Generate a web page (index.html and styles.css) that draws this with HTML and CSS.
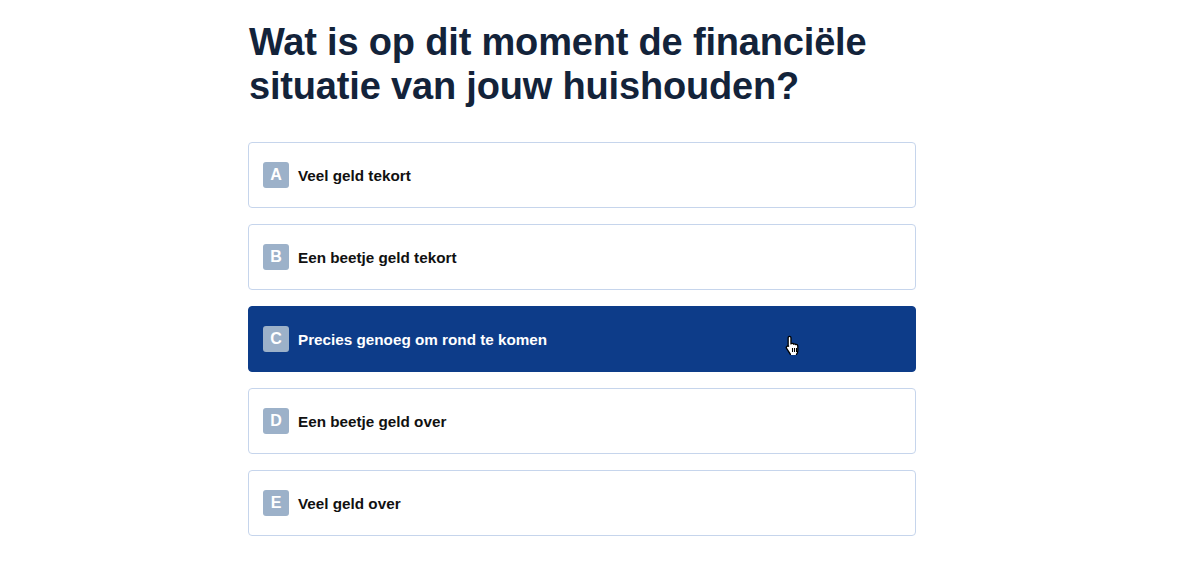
FILE: index.html
```html
<!DOCTYPE html>
<html lang="nl">
<head>
<meta charset="utf-8">
<title>Financiële situatie</title>
<link rel="stylesheet" href="styles.css">
</head>
<body>
<main class="question">
  <h1 class="question-title">Wat is op dit moment de financiële situatie van jouw huishouden?</h1>
  <ul class="options">
    <li class="option"><span class="key">A</span><span class="label">Veel geld tekort</span></li>
    <li class="option"><span class="key">B</span><span class="label">Een beetje geld tekort</span></li>
    <li class="option option-active"><span class="key">C</span><span class="label">Precies genoeg om rond te komen</span>
      <svg class="cursor" width="17" height="20" viewBox="0 0 14 17" aria-hidden="true">
        <path d="M4.5 1.2c.7 0 1.2.5 1.2 1.2v5.1l.5-.1c.6-.4 1.4-.3 1.8.3.6-.3 1.3-.2 1.7.4.6-.2 1.3 0 1.6.6.1.3.2.6.2 1v3.6c0 1.2-.4 2.3-1.1 3.2v1.5H5.2v-1.6L2.1 11.6c-.5-.6-.5-1.4.1-1.9.5-.4 1.3-.4 1.8.1l-.7-.6V2.4c0-.7.5-1.2 1.2-1.2z" fill="#fff" stroke="#000" stroke-width="1.1"/>
        <path d="M7 11v3.4M8.7 11v3.4M10.4 11v3.4" stroke="#000" stroke-width="0.9"/>
      </svg>
    </li>
    <li class="option"><span class="key">D</span><span class="label">Een beetje geld over</span></li>
    <li class="option"><span class="key">E</span><span class="label">Veel geld over</span></li>
  </ul>
</main>
</body>
</html>
```
FILE: styles.css
```css
* { box-sizing: border-box; }
html, body { margin: 0; padding: 0; background: #fff; }
body {
  font-family: "Liberation Sans", Arial, Helvetica, sans-serif;
  color: #111;
}
.question {
  width: 668px;
  margin-left: 248px;
  padding-top: 20px;
}
.question-title {
  margin: 0 0 34px 1px;
  font-size: 38px;
  line-height: 44px;
  font-weight: 700;
  letter-spacing: -0.18px;
  color: #13233a;
}
.options {
  list-style: none;
  margin: 0;
  padding: 0;
  display: flex;
  flex-direction: column;
  gap: 16px;
}
.option {
  position: relative;
  display: flex;
  align-items: center;
  height: 66px;
  padding: 0 14px;
  border: 1px solid #c6d5ec;
  border-radius: 4px;
  background: #fff;
}
.option-active {
  background: #0d3c89;
  border-color: #0d3c89;
}
.key {
  width: 26px;
  height: 26px;
  border-radius: 3px;
  background: #9cb1c9;
  color: #fff;
  font-size: 16px;
  font-weight: 700;
  display: flex;
  align-items: center;
  justify-content: center;
  margin-right: 9px;
}
.label {
  font-size: 15.25px;
  font-weight: 700;
  color: #111;
}
.option-active .label { color: #fff; }
.cursor {
  position: absolute;
  left: 535px;
  top: 28px;
}
```
